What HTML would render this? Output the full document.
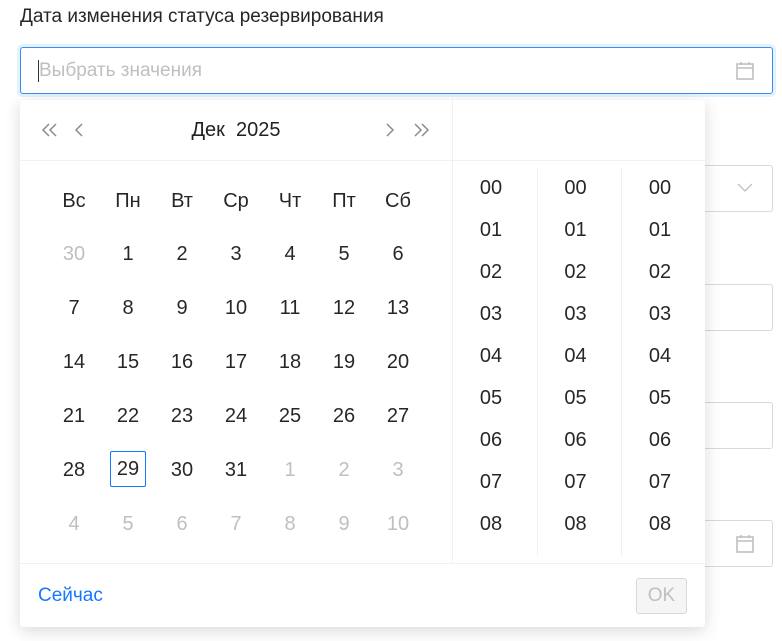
<!DOCTYPE html>
<html><head><meta charset="utf-8"><style>
*{box-sizing:border-box;margin:0;padding:0}
body{width:782px;height:641px;background:#fff;font-family:"Liberation Sans",sans-serif;color:rgba(0,0,0,.85);position:relative;overflow:hidden}
.abs{position:absolute}
.lbl{left:20px;top:6px;font-size:19px;color:#262626}
.inp{left:20px;top:47px;width:753px;height:47px;border:1px solid #3a8ef0;border-radius:3px;box-shadow:0 0 0 3px rgba(24,144,255,.12)}
.ph{left:18px;top:12px;font-size:19px;color:#bfbfbf}
.caret{left:17px;top:12px;width:1px;height:22px;background:#333}
.fld{left:600px;width:173px;height:47px;border:1px solid #d9d9d9;border-radius:3px}
.pop{left:20px;top:100px;width:685px;height:527px;background:#fff;border-radius:3px;box-shadow:0 4px 16px rgba(0,0,0,.15)}
.c{position:absolute;width:40px;text-align:center;font-size:20px;line-height:26px}
.g{color:#bfbfbf}
.t{position:absolute;width:60px;text-align:center;font-size:20px;line-height:26px}
.vl{position:absolute;width:1px;background:#f0f0f0}
</style></head><body>
<div class="abs lbl">Дата изменения статуса резервирования</div>
<div class="abs fld" style="top:165px"><svg class="abs" style="left:136px;top:16px" width="16" height="12"><path d="M1 2l7 7 7-7" fill="none" stroke="#bfbfbf" stroke-width="1.3"/></svg></div>
<div class="abs fld" style="top:284px"></div>
<div class="abs fld" style="top:402px"></div>
<div class="abs fld" style="top:520px"><svg class="abs" style="left:135px;top:13px" width="18" height="20"><rect x="1" y="3" width="16" height="15" fill="none" stroke="#bfbfbf" stroke-width="1.6"/><path d="M1 7h16M5 1v3M13 1v3" stroke="#bfbfbf" stroke-width="1.6"/></svg></div>
<div class="abs inp"><div class="abs caret"></div><div class="abs ph">Выбрать значения</div>
<svg class="abs" style="left:715px;top:13px" width="18" height="20"><rect x="1" y="3" width="16" height="15" fill="none" stroke="#bfbfbf" stroke-width="1.6"/><path d="M1 7h16M5 1v3M13 1v3" stroke="#bfbfbf" stroke-width="1.6"/></svg></div>
<div class="abs pop">
<div class="vl" style="left:432px;top:0;height:463px"></div>
<div class="abs" style="left:0;top:60px;width:432px;height:1px;background:#f0f0f0"></div>
<div class="abs" style="left:432px;top:60px;width:253px;height:1px;background:#f0f0f0"></div>
<svg class="abs" style="left:20px;top:22px" width="22" height="16"><path d="M9 2L3 8l6 6M16 2l-6 6 6 6" fill="none" stroke="#8c8c8c" stroke-width="1.5"/></svg>
<svg class="abs" style="left:53px;top:22px" width="12" height="16"><path d="M9 2L3 8l6 6" fill="none" stroke="#8c8c8c" stroke-width="1.5"/></svg>
<div class="abs" style="left:0;width:432px;top:17px;text-align:center;font-size:20px;line-height:26px;color:#222">Дек&nbsp; 2025</div>
<svg class="abs" style="left:364px;top:22px" width="12" height="16"><path d="M3 2l6 6-6 6" fill="none" stroke="#8c8c8c" stroke-width="1.5"/></svg>
<svg class="abs" style="left:391px;top:22px" width="22" height="16"><path d="M4 2l6 6-6 6M11 2l6 6-6 6" fill="none" stroke="#8c8c8c" stroke-width="1.5"/></svg>
<div class="vl" style="left:517px;top:68px;height:388px"></div>
<div class="vl" style="left:601px;top:68px;height:388px"></div>
<div class="abs" style="left:0;top:463px;width:685px;height:1px;background:#f0f0f0"></div>
<div class="abs" style="left:18px;top:485px;font-size:19px;color:#1677ff">Сейчас</div>
<div class="abs" style="left:616px;top:478px;width:51px;height:36px;border:1px solid #d9d9d9;border-radius:3px;background:#f5f5f5;color:#bfbfbf;font-size:19px;text-align:center;line-height:34px">OK</div>
</div>
<script>
var p=document.querySelector('.pop');
var h=['Вс','Пн','Вт','Ср','Чт','Пт','Сб'];
var d=[[30,1,2,3,4,5,6],[7,8,9,10,11,12,13],[14,15,16,17,18,19,20],[21,22,23,24,25,26,27],[28,29,30,31,1,2,3],[4,5,6,7,8,9,10]];
var s='';
for(var i=0;i<7;i++)s+='<div class="c" style="left:'+(34+i*54)+'px;top:88px">'+h[i]+'</div>';
for(var r=0;r<6;r++)for(var i=0;i<7;i++){var g=(r==0&&i==0)||(r==4&&i>3)||r==5;
var tp=141+r*54;
var sel='';
if(r==4&&i==1){sel='border:1px solid #1677ff;border-radius:2px;width:36px;height:36px;line-height:34px;margin-left:2px;';tp=351;}
s+='<div class="c'+(g?' g':'')+'" style="left:'+(34+i*54)+'px;top:'+tp+'px;'+sel+'">'+d[r][i]+'</div>';}
for(var c=0;c<3;c++)for(var r=0;r<9;r++)s+='<div class="t" style="left:'+(441+c*84.5)+'px;top:'+(75+r*42)+'px">0'+r+'</div>';
p.insertAdjacentHTML('beforeend',s);
</script>
</body></html>
